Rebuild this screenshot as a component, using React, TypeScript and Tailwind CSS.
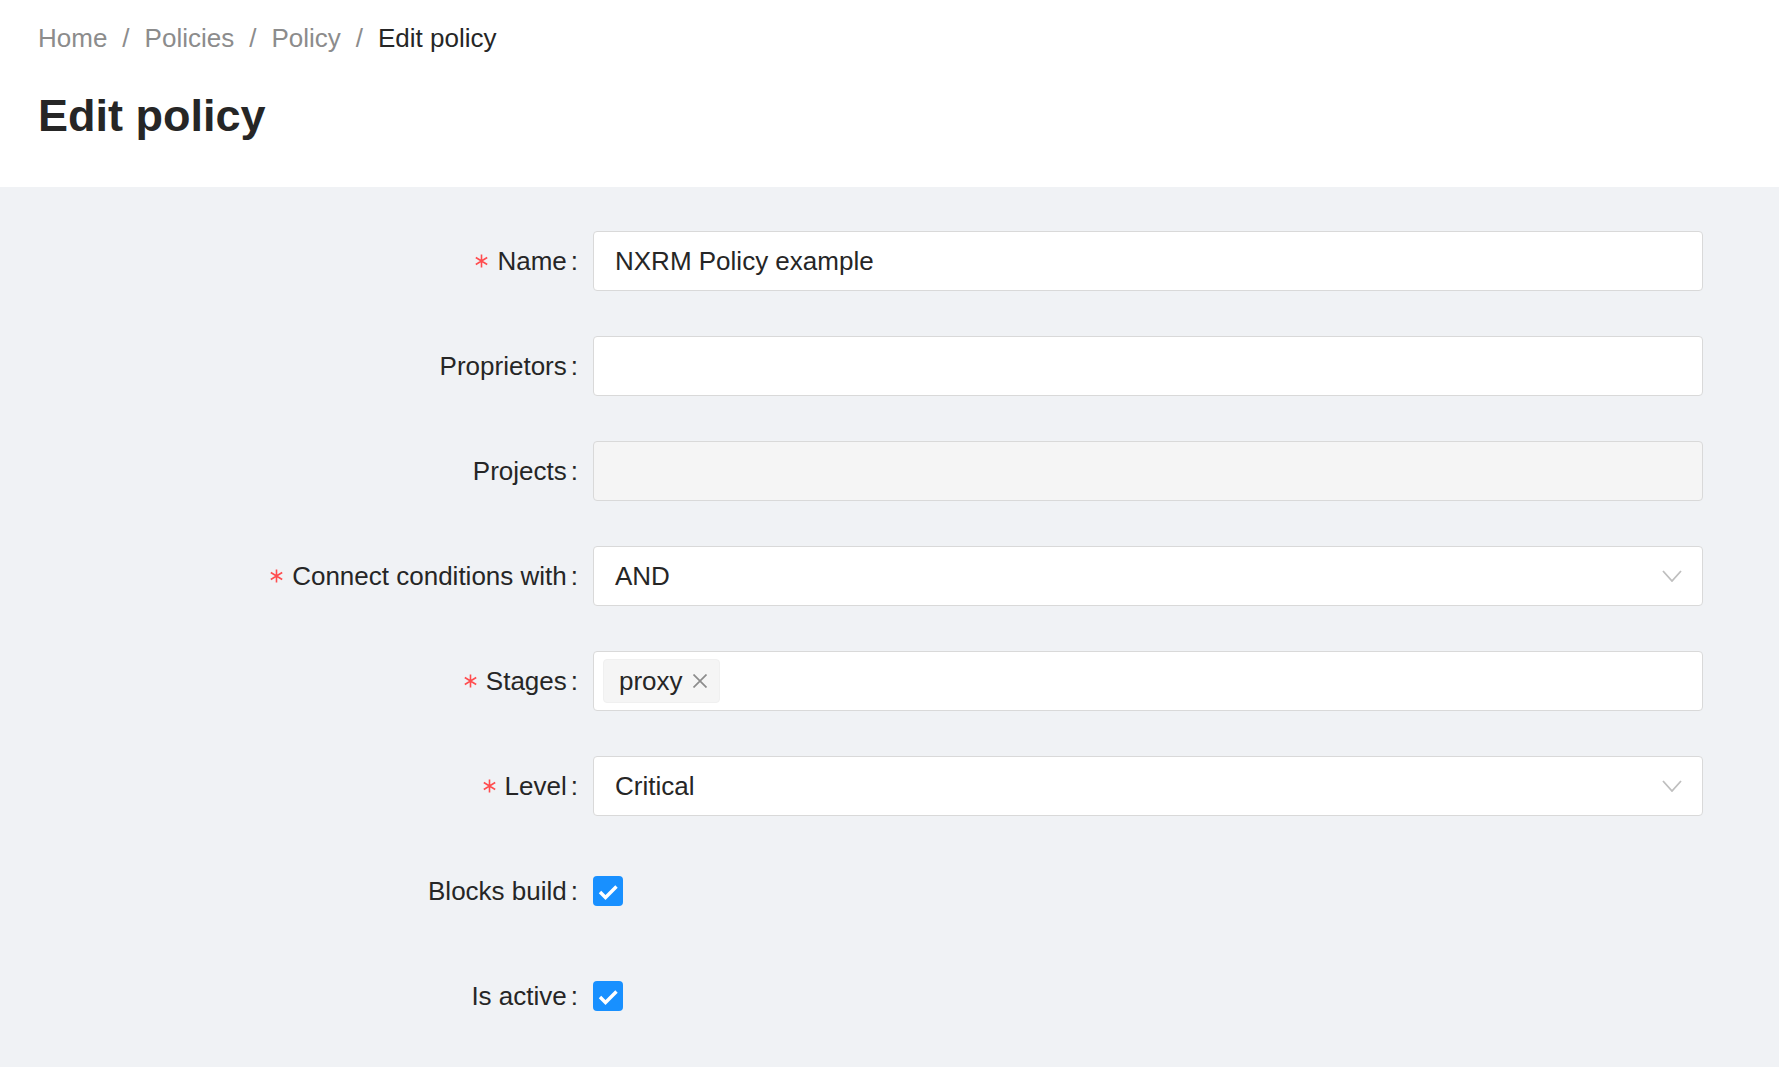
import type { ReactNode } from 'react'

const font = "font-['Liberation_Sans',Arial,sans-serif]"

function Chevron() {
  return (
    <svg width="20" height="12" viewBox="0 0 20 12" fill="none">
      <path d="M1 1L10 11L19 1" stroke="#bfbfbf" strokeWidth="1.8" />
    </svg>
  )
}

function Check() {
  return (
    <span className="flex h-[30px] w-[30px] items-center justify-center rounded-[4px] bg-[#1890ff]">
      <svg width="30" height="30" viewBox="0 0 30 30" fill="none">
        <path
          d="M7 16L12.5 21.5L23.5 10.5"
          stroke="white"
          strokeWidth="3.4"
        />
      </svg>
    </span>
  )
}

// required marker, drawn like the thin six-armed asterisk of the reference
function Required() {
  return (
    <svg className="mr-[9px]" width="13" height="14" viewBox="0 0 13 14" fill="none">
      <path
        d="M6.5 0.5V13.5M0.8 3.5L12.2 10.5M12.2 3.5L0.8 10.5"
        stroke="#ff4d4f"
        strokeWidth="1.6"
      />
    </svg>
  )
}

function Row({
  label,
  required,
  children,
}: {
  label: string
  required?: boolean
  children: ReactNode
}) {
  return (
    <div className="flex h-[60px] items-center">
      <div className="flex w-[593px] shrink-0 items-center justify-end text-[26px] text-[#262626]">
        {required && <Required />}
        <span>{label}</span>
        <span className="ml-[4px] mr-[15px]">:</span>
      </div>
      {children}
    </div>
  )
}

const box =
  'flex h-[60px] w-[1110px] items-center rounded-[4px] border border-[#d9d9d9] text-[26px] text-[#262626]'

export default function App() {
  return (
    <div className={`${font} flex min-h-screen flex-col bg-[#f0f2f5]`}>
      <header className="bg-white px-[38px] pb-[41px] pt-[18px]">
        <nav className="flex text-[26px] leading-[41px] text-[#8c8c8c]">
          <span>Home</span>
          <span className="mx-[15px]">/</span>
          <span>Policies</span>
          <span className="mx-[15px]">/</span>
          <span>Policy</span>
          <span className="mx-[15px]">/</span>
          <span className="text-[#262626]">Edit policy</span>
        </nav>
        <h1 className="mt-[27px] text-[45px] font-bold leading-[60px] text-[#262626]">
          Edit policy
        </h1>
      </header>

      <main className="flex flex-col gap-[45px] pb-[36px] pt-[44px]">
        <Row label="Name" required>
          <div className={`${box} bg-white px-[21px]`}>NXRM Policy example</div>
        </Row>
        <Row label="Proprietors">
          <div className={`${box} bg-white`}></div>
        </Row>
        <Row label="Projects">
          <div className={`${box} bg-[#f5f5f5]`}></div>
        </Row>
        <Row label="Connect conditions with" required>
          <div className={`${box} justify-between bg-white pl-[21px] pr-[20px]`}>
            <span>AND</span>
            <Chevron />
          </div>
        </Row>
        <Row label="Stages" required>
          <div className={`${box} bg-white pl-[9px]`}>
            <span className="flex h-[44px] items-center rounded-[4px] border border-[#f0f0f0] bg-[#f5f5f5] pl-[15px] pr-[12px]">
              proxy
              <svg className="ml-[10px]" width="14" height="14" viewBox="0 0 14 14" fill="none">
                <path d="M0.5 0.5L13.5 13.5M13.5 0.5L0.5 13.5" stroke="#8c8c8c" strokeWidth="1.7" />
              </svg>
            </span>
          </div>
        </Row>
        <Row label="Level" required>
          <div className={`${box} justify-between bg-white pl-[21px] pr-[20px]`}>
            <span>Critical</span>
            <Chevron />
          </div>
        </Row>
        <Row label="Blocks build">
          <Check />
        </Row>
        <Row label="Is active">
          <Check />
        </Row>
      </main>
    </div>
  )
}
